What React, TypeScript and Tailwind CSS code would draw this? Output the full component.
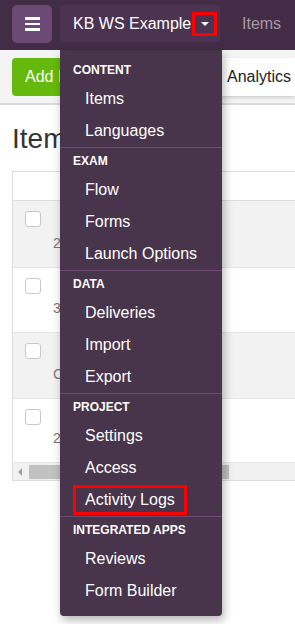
import React from "react";

const sections = [
  { title: "CONTENT", items: ["Items", "Languages"] },
  { title: "EXAM", items: ["Flow", "Forms", "Launch Options"] },
  { title: "DATA", items: ["Deliveries", "Import", "Export"] },
  { title: "PROJECT", items: ["Settings", "Access", "Activity Logs"] },
  { title: "INTEGRATED APPS", items: ["Reviews", "Form Builder"] },
];

// only the first glyph of each row's sub line shows beside the open menu
const rows = [
  { bg: "bg-[#f2f2f2]", h: "h-[67px]", sub: "2" },
  { bg: "bg-white", h: "h-[65px]", sub: "3" },
  { bg: "bg-[#f2f2f2]", h: "h-[66px]", sub: "C" },
  { bg: "bg-white", h: "h-[64px]", sub: "2" },
];

const DropdownMenu = () => {
  return (
    <div className="absolute left-[60px] top-[50px] z-20 w-[162px] rounded-b-[4px] bg-[#48344b] pt-[7px] pb-[9px] shadow-[2px_4px_10px_rgba(0,0,0,0.3)]">
      {sections.map((section, i) => (
        <div key={section.title}>
          {i > 0 && <hr className="h-px border-none bg-[#6e4b72]" />}
          <div className="flex h-[26px] items-center pl-[13px] text-[12px] font-bold text-white">
            {section.title}
          </div>
          {section.items.map((item) =>
            item === "Activity Logs" ? (
              <div key={item} className="flex h-[32px] items-center pl-[13px]">
                <span className="flex h-[30px] w-[114px] items-center border-[3px] border-[#ff0000] pl-[9px] text-[16px] text-white">
                  {item}
                </span>
              </div>
            ) : (
              <div
                key={item}
                className="flex h-[32px] items-center pl-[25px] text-[16px] text-white"
              >
                {item}
              </div>
            )
          )}
        </div>
      ))}
    </div>
  );
};

export default function App() {
  return (
    <div className="relative h-[624px] w-[295px] overflow-hidden bg-white font-['Liberation_Sans',Arial,sans-serif]">
      {/* top nav */}
      <nav className="flex h-[50px] items-start bg-[#432c45] pl-[12px] pt-[5px]">
        <button className="flex h-[38px] w-[40px] shrink-0 flex-col items-center justify-center gap-[3px] rounded-[5px] bg-[#6c4a76]">
          <span className="h-[2.5px] w-[15px] bg-white" />
          <span className="h-[2.5px] w-[15px] bg-white" />
          <span className="h-[2.5px] w-[15px] bg-white" />
        </button>
        <div className="ml-[8px] flex h-[37px] w-[160px] shrink-0 items-center whitespace-nowrap rounded-[4px] bg-[#4b3351] pl-[13px] text-[16px] text-white">
          <span>KB WS Example</span>
          <span className="ml-[1px] flex h-[24px] w-[25px] shrink-0 items-center justify-center border-[3px] border-[#ff0000]">
            <span className="h-0 w-0 border-x-[4px] border-t-[4px] border-x-transparent border-t-white" />
          </span>
        </div>
        <div className="ml-[22px] flex h-[37px] items-center text-[16px] text-[#a898aa]">
          Items
        </div>
      </nav>

      {/* toolbar */}
      <div className="flex h-[55px] items-start gap-[10px] border-b-2 border-[#dcdcdc] bg-[#f4f4f4] pl-[12px] pt-[8px]">
        <button className="flex h-[38px] w-[110px] shrink-0 items-center rounded-[4px] bg-[#65b90c] pl-[13px] text-[16px] text-white">
          <span className="w-[35px] overflow-hidden whitespace-nowrap text-left">
            Add Item
          </span>
        </button>
        <div className="flex h-[38px] flex-1 items-center justify-end bg-white pr-[4px] text-[16px] text-[#222] shadow-[0_2px_3px_rgba(0,0,0,0.15)]">
          Analytics
        </div>
      </div>

      {/* heading */}
      <h1 className="pl-[12px] pt-[14px] text-[28px] leading-[40px] text-[#333]">
        Items
      </h1>

      {/* table */}
      <div className="ml-[12px] mt-[12px] w-[320px] border border-[#dddddd]">
        <div className="h-[29px] border-b border-[#dddddd] bg-white" />
        {rows.map((row, i) => (
          <div
            key={i}
            className={`flex border-b border-[#e6e6e6] ${row.bg} ${row.h}`}
          >
            <div className="w-[40px] shrink-0 pl-[12px] pt-[10px]">
              <div className="h-[16px] w-[16px] rounded-[3px] border border-[#c8c8c8] bg-white" />
            </div>
            <div className="flex flex-col justify-end pb-[13px] text-[14px] text-[#777]">
              {row.sub}
            </div>
          </div>
        ))}
        <div className="flex h-[17px] items-center bg-[#f1f1f1]">
          <span className="ml-[5px] h-0 w-0 border-y-[4px] border-r-[4px] border-y-transparent border-r-[#a3a3a3]" />
          <div className="ml-[7px] h-[14px] w-[200px] bg-[#c1c1c1]" />
        </div>
      </div>

      <DropdownMenu />
    </div>
  );
}
